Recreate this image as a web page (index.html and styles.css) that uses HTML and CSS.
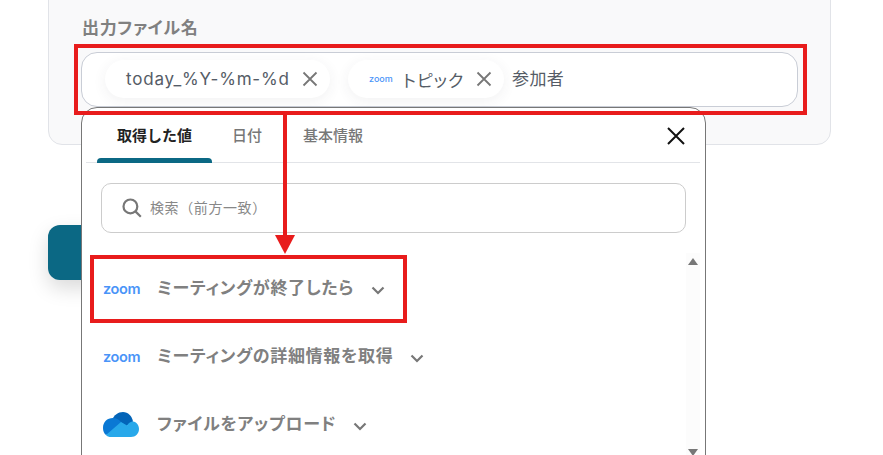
FILE: index.html
```html
<!DOCTYPE html>
<html lang="ja">
<head>
<meta charset="utf-8">
<title>出力ファイル名</title>
<link rel="stylesheet" href="styles.css">
</head>
<body>
<div class="page">
  <section class="card">
    <div class="label">出力ファイル名</div>
    <div class="field">
      <span class="chip chip-date">today_%Y-%m-%d
        <svg class="chip-x" viewBox="0 0 16 16"><path d="M1.5 1.5l13 13M14.5 1.5l-13 13"/></svg>
      </span>
      <span class="chip chip-topic"><span class="zoom zoom-small">zoom</span>トピック
        <svg class="chip-x" viewBox="0 0 16 16"><path d="M1.5 1.5l13 13M14.5 1.5l-13 13"/></svg>
      </span>
      <span class="plain">参加者</span>
    </div>
  </section>
  <div class="primary-btn"></div>

  <div class="popup">
    <div class="tabs">
      <span class="tab tab-active">取得した値</span>
      <span class="tab tab-date">日付</span>
      <span class="tab tab-info">基本情報</span>
      <svg class="close" viewBox="0 0 20 20"><path d="M2 2l16 16M18 2L2 18"/></svg>
    </div>
    <div class="search">
      <svg class="search-icon" viewBox="0 0 20 20"><circle cx="8.4" cy="8.4" r="6.9"/><path d="M13.4 13.4l5.4 5.4"/></svg>
      <span class="search-text">検索（前方一致）</span>
    </div>
    <div class="list">
      <div class="row"><span class="logo"><span class="zoom">zoom</span></span><span class="row-text">ミーティングが終了したら</span><svg class="chev" viewBox="0 0 14 9"><path d="M1.5 1.5L7 7l5.5-5.5"/></svg></div>
      <div class="row"><span class="logo"><span class="zoom">zoom</span></span><span class="row-text">ミーティングの詳細情報を取得</span><svg class="chev" viewBox="0 0 14 9"><path d="M1.5 1.5L7 7l5.5-5.5"/></svg></div>
      <div class="row"><span class="logo">
        <svg class="onedrive" viewBox="0 0 36 25">
          <path fill="#0364b8" d="M9 8C11 3 15 0 20 0c5 0 9 4 10 9.5L22 15z"/>
          <path fill="#0a78d4" d="M0 16C0 10 4 6 10 6c3 0 6 1.5 8 4l6 4L3 23C1 21.5 0 19 0 16z"/>
          <path fill="#28a8ea" d="M3 23L18 10l6 3.5c1.5-2.5 4-4 6-4 3.5.5 6 3.5 6 7.5 0 4.5-3.5 8-8 8H8c-2 0-4-.5-5-2z"/>
        </svg></span><span class="row-text">ファイルをアップロード</span><svg class="chev" viewBox="0 0 14 9"><path d="M1.5 1.5L7 7l5.5-5.5"/></svg></div>
      <div class="scrollbar"><i class="arrow-up"></i><i class="arrow-down"></i></div>
    </div>
  </div>

  <div class="mark mark-field"></div>
  <div class="mark mark-row"></div>
  <div class="connector"></div>
</div>
</body>
</html>
```

FILE: styles.css
```css
* { box-sizing: border-box; }
html, body { margin: 0; padding: 0; background: #fff; }
body { font-family: "Inter", "Noto Sans CJK JP", sans-serif; }
.page { position: relative; width: 883px; height: 455px; overflow: hidden; }

.card {
  width: 783px; height: 165px; margin: -20px 0 0 48px; padding: 34px 32px 0 33px;
  background: #f9f9fa; border: 1px solid #e1e3e8; border-radius: 14px;
}
.label { font: 700 17px/24px "Noto Sans CJK JP", sans-serif; font-feature-settings: "palt"; letter-spacing: .7px; color: #808080; height: 24px; }
.field {
  display: flex; align-items: center; height: 55px; margin: 13px 0 0 -1px; padding: 0 0 1px 23px;
  background: #fff; border: 1px solid #c9cdd6; border-radius: 16px;
}
.chip {
  display: flex; align-items: center; height: 38px; border-radius: 19px; background: #fff;
  box-shadow: 0 3px 14px rgba(60, 60, 70, .07); color: #555c66; font-size: 17px; letter-spacing: .8px;
  font-family: "Inter", "Noto Sans CJK JP", sans-serif; font-feature-settings: "palt"; white-space: nowrap;
}
.chip-date { width: 225px; padding-left: 21px; }
.chip-topic { width: 156px; margin-left: 18px; padding-left: 21px; letter-spacing: 1px; }
.chip-x { width: 16px; height: 16px; margin-left: auto; margin-right: 12px; flex: none; }
.chip-x path { fill: none; stroke: #777; stroke-width: 1.8; }
.plain { margin: -3px 0 0 8px; font: 400 17px/24px "Noto Sans CJK JP", sans-serif; letter-spacing: .4px; color: #555c66; }

.zoom { font: 600 14.5px/16px "Inter", sans-serif; color: #4a94f8; letter-spacing: -.4px; display: inline-block; }
.zoom-small { font-size: 9px; font-weight: 500; letter-spacing: 0; margin-right: 10px; }

.primary-btn { width: 120px; height: 55px; margin: 80px 0 0 48px; background: #0b6884; border-radius: 12px; box-shadow: 0 8px 20px rgba(0, 0, 0, .15); }

.popup {
  position: absolute; left: 81px; top: 107px; width: 625px; height: 360px;
  background: #fff; border: 1px solid #777; border-radius: 16px 16px 0 0;
  font-family: "Noto Sans CJK JP", sans-serif;
}
.tabs {
  position: relative; display: flex; align-items: center; height: 55px; margin: 0 5px 0 4px; padding: 0 0 0 31px;
  border-bottom: 1px solid #e2e4e8; font-size: 15px; font-weight: 500; color: #777;
}
.tab { line-height: 20px; }
.tab-active { color: #222; font-weight: 700; }
.tab-date { margin-left: 40px; }
.tab-info { margin-left: 41px; }
.tab-active::after {
  content: ""; position: absolute; left: 11px; bottom: -1px; width: 115px; height: 5px;
  background: #0b6884; border-radius: 4px 4px 0 0;
}
.close { width: 20px; height: 20px; margin-left: auto; margin-right: 14px; margin-top: 2px; }
.close path { fill: none; stroke: #111; stroke-width: 2; }

.search {
  display: flex; align-items: center; height: 50px; margin: 20px 19px 0; padding: 0 0 0 20px;
  border: 1px solid #ccc; border-radius: 10px; color: #888; font-size: 14px; letter-spacing: .6px;
}
.search-text { margin-top: -2px; }
.search-icon { width: 20px; height: 20px; margin-right: 8px; flex: none; }
.search-icon circle, .search-icon path { fill: none; stroke: #777; stroke-width: 2.2; }

.list { position: relative; margin-top: 21px; padding-top: 1px; }
.row {
  display: flex; align-items: center; height: 68px; padding-left: 21px;
  font-size: 17px; font-weight: 700; letter-spacing: .7px; color: #808080; font-feature-settings: "palt";
}
.row-text { margin-top: -6px; }
.logo { width: 54px; flex: none; display: flex; align-items: center; }
.onedrive { width: 36px; height: 25px; margin-top: -2px; }
.chev { width: 14px; height: 9px; margin-left: 17px; margin-top: 3px; }
.chev path { fill: none; stroke: #777; stroke-width: 2.2; }

.scrollbar { position: absolute; right: 5px; top: -1px; width: 14px; height: 210px; background: #fcfcfc; }
.arrow-up, .arrow-down { position: absolute; left: 2px; width: 0; height: 0; border-left: 5px solid transparent; border-right: 5px solid transparent; }
.arrow-up { top: 5px; border-bottom: 7px solid #777; }
.arrow-down { top: 196px; border-top: 7px solid #777; }

.mark { position: absolute; border: 4px solid #e81c1c; }
.mark-field { left: 74px; top: 44px; width: 733px; height: 71px; }
.mark-row { left: 90px; top: 255px; width: 317px; height: 68px; }
.connector { position: absolute; left: 283px; top: 115px; width: 4px; height: 122px; background: #e81c1c; }
.connector::after {
  content: ""; position: absolute; left: -8px; top: 120px; width: 0; height: 0;
  border-left: 10px solid transparent; border-right: 10px solid transparent; border-top: 19px solid #e81c1c;
}
```
